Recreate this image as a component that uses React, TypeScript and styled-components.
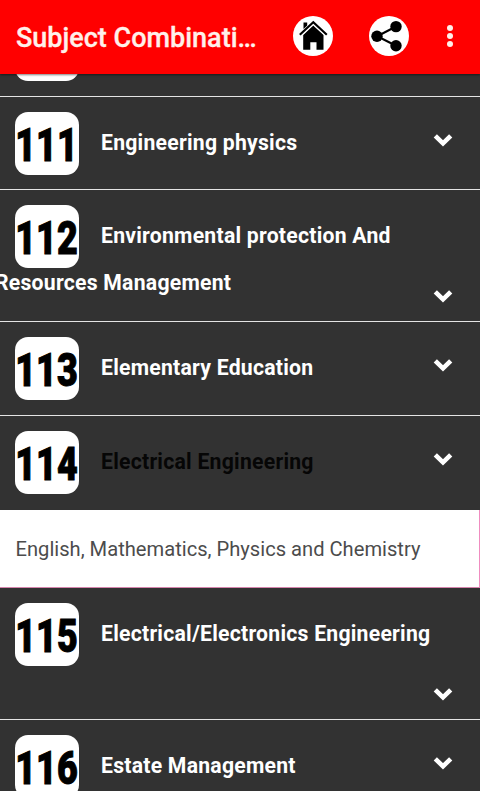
import styled, { createGlobalStyle } from "styled-components";

interface Course {
  code: string;
  title: string;
  height: number;
  overflow?: string;
  tall?: boolean;
  active?: boolean;
  details?: string;
}

const courses: Course[] = [
  { code: '111', title: 'Engineering physics', height: 93 },
  {
    code: '112',
    title: 'Environmental protection And',
    overflow: 'Resources Management',
    height: 132,
    tall: true
  },
  { code: '113', title: 'Elementary Education', height: 94 },
  {
    code: '114',
    title: 'Electrical Engineering',
    height: 94,
    active: true,
    details: 'English, Mathematics, Physics and Chemistry'
  },
  { code: '115', title: 'Electrical/Electronics Engineering', height: 132, tall: true },
  { code: '116', title: 'Estate Management', height: 94 },
];

function Chevron() {
  return (
    <ChevronIcon viewBox="0 0 20 14">
      <path d="M2.3 2.8 L10 10.3 L17.7 2.8" fill="none" stroke="#fff" strokeWidth="4.6" />
    </ChevronIcon>
  );
}

function HomeIcon() {
  return (
    <RoundIcon viewBox="0 0 40 40">
      <circle cx="20" cy="20" r="20" fill="#fff" />
      <path d="M10.5 6.5h3.7v3.1l-3.7 3.3z" />
      <path d="M6.8 18.7 20.3 6.3 33.8 18.7" fill="none" stroke="#000" strokeWidth="2.2" />
      <path d="M20.3 9.6 30.5 18.9V33.8H23.5V26.2H17.3V33.8H10.2V18.9z" />
      <path d="M9.4 18.9 20.3 8.9 31.2 18.9" fill="none" stroke="#fff" strokeWidth="0.7" />
    </RoundIcon>
  );
}

function ShareIcon() {
  return (
    <RoundIcon viewBox="0 0 40 40">
      <circle cx="20" cy="20" r="20" fill="#fff" />
      <path d="M27 10.5 8.2 20.2 27 29.8" fill="none" stroke="#000" strokeWidth="2.1" />
      <circle cx="27" cy="10.6" r="5.7" />
      <circle cx="8" cy="20.2" r="5.7" />
      <circle cx="27" cy="29.7" r="5.7" />
    </RoundIcon>
  );
}

function CourseItem({ course }: { course: Course }) {
  return (
    <>
      <Row $height={course.height} $open={!!course.details}>
        <RowHead>
          <Badge><Digits>{course.code}</Digits></Badge>
          <Title $active={course.active}>{course.title}</Title>
          {!course.tall && <Chevron />}
        </RowHead>
        {course.tall && (
          <RowFoot>
            <OverflowTitle>{course.overflow}</OverflowTitle>
            <Chevron />
          </RowFoot>
        )}
      </Row>
      {course.details && <Details>{course.details}</Details>}
    </>
  );
}

export default function App() {
  return (
    <Screen>
      <GlobalStyle />
      <Toolbar>
        <ToolbarTitle>Subject Combinati…</ToolbarTitle>
        <HomeIcon />
        <ShareIcon />
        <MenuDots>
          <Dot />
          <Dot />
          <Dot />
        </MenuDots>
      </Toolbar>
      <List>
        <ScrolledRow>
          <Badge />
        </ScrolledRow>
        {courses.map(course => (
          <CourseItem key={course.code} course={course} />
        ))}
      </List>
    </Screen>
  );
}

const GlobalStyle = createGlobalStyle`
  * {
    box-sizing: border-box;
  }

  body {
    margin: 0;
    background-color: #323232;
    font-family: Roboto, sans-serif;
  }
`;

const Screen = styled.div`
  display: flex;
  flex-direction: column;
  height: 791px;
  overflow: hidden;
  background-color: #323232;
`;

const Toolbar = styled.header`
  display: flex;
  align-items: center;
  flex: none;
  height: 74px;
  padding: 0 26px 3px 16px;
  background-color: #ff0000;
  box-shadow: 0 1px 2px rgba(0, 0, 0, 0.5);
  z-index: 1;
`;

const ToolbarTitle = styled.h1`
  width: 276.5px;
  margin: 4px 0 0;
  color: #fff0ea;
  font-size: 27px;
  font-weight: 500;
  white-space: nowrap;
  -webkit-text-stroke: 0.3px #fff0ea;
`;

const RoundIcon = styled.svg`
  flex: none;
  width: 40px;
  height: 40px;
  margin-right: 36px;
`;

const MenuDots = styled.div`
  display: flex;
  flex-direction: column;
  gap: 2px;
  margin-left: 2.5px;
`;

const Dot = styled.span`
  width: 6px;
  height: 6px;
  border-radius: 50%;
  background-color: #fff0ea;
`;

const List = styled.main`
  flex: 1;
  overflow: hidden;
`;

const ScrolledRow = styled.div`
  display: flex;
  align-items: flex-end;
  height: 23px;
  padding: 0 15px 15px;
  border-bottom: 1px solid #e4e4e4;
`;

const Row = styled.section<{ $height: number; $open: boolean }>`
  height: ${props => props.$height}px;
  padding-top: 15px;
  border-bottom: ${props => props.$open ? 'none' : '1px solid #e4e4e4'};
`;

const RowHead = styled.div`
  display: flex;
  align-items: center;
  height: 63px;
  padding: 0 27px 0 15px;
`;

const RowFoot = styled.div`
  display: flex;
  align-items: center;
  height: 38px;
  padding-right: 27px;
  padding-top: 25px;
`;

const Badge = styled.div`
  display: flex;
  align-items: center;
  justify-content: center;
  flex: none;
  width: 64px;
  height: 63px;
  border-radius: 13px;
  background-color: #fff;
`;

const Digits = styled.span`
  color: #000;
  font-size: 46px;
  font-weight: 900;
  line-height: 63px;
  transform: translate(-0.5px, 2px) scaleX(0.78);
  -webkit-text-stroke: 1px #000;
`;

const Title = styled.span<{ $active?: boolean }>`
  flex: 1;
  margin: -2px 0 0 22px;
  color: ${props => props.$active ? '#060606' : '#fff'};
  font-size: 21.2px;
  font-weight: 700;
  letter-spacing: 0.24px;
  white-space: nowrap;
`;

const OverflowTitle = styled.span`
  flex: 1;
  margin: -34px 0 0 -5px;
  color: #fff;
  font-size: 21.2px;
  font-weight: 700;
  letter-spacing: 0.24px;
`;

const ChevronIcon = styled.svg`
  flex: none;
  width: 20px;
  height: 14px;
  margin-top: -7px;
`;

const Details = styled.p`
  display: flex;
  align-items: center;
  height: 78px;
  margin: 0;
  padding-left: 15.5px;
  background-color: #fff;
  border-right: 1px solid #f08cc0;
  border-bottom: 1px solid #d684ac;
  color: #4c4c4c;
  font-size: 20.15px;
`;
